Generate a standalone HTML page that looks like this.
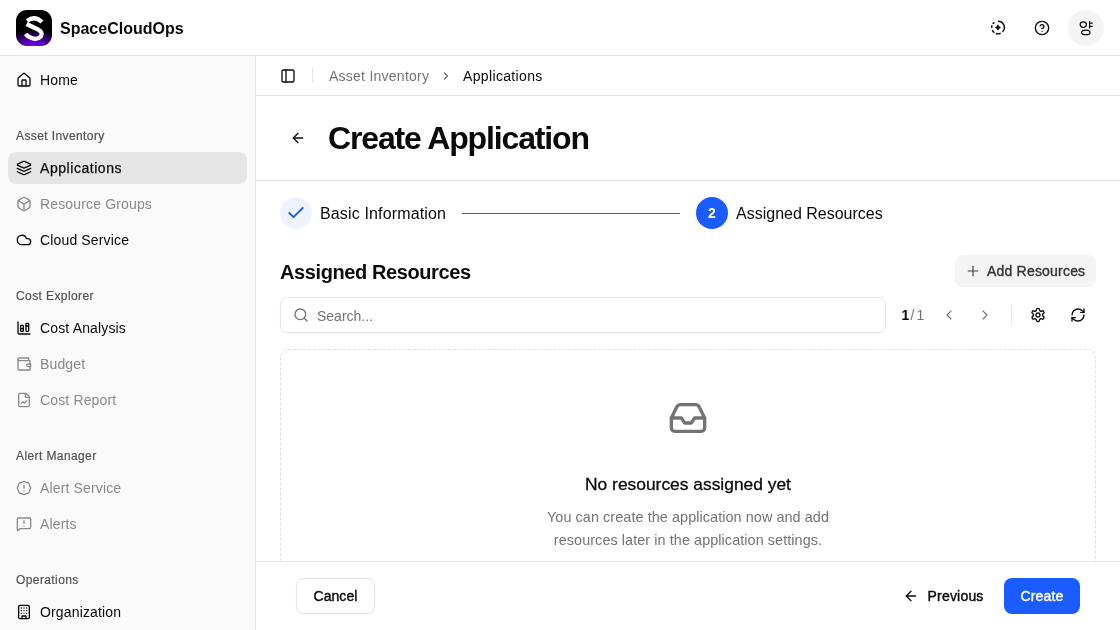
<!DOCTYPE html>
<html><head><meta charset="utf-8">
<style>
*{box-sizing:border-box;margin:0;padding:0}
html,body{width:1120px;height:630px;overflow:hidden;background:#fff;font-family:"Liberation Sans",sans-serif;color:#0a0a0a}
.abs{position:absolute}
svg{display:block}
.ic{position:absolute;fill:none;stroke:currentColor;stroke-linecap:round;stroke-linejoin:round}
.t{position:absolute;white-space:nowrap;line-height:1}
#header{position:absolute;left:0;top:0;width:1120px;height:56px;border-bottom:1px solid #e5e5e5;background:#fff}
#side{position:absolute;left:0;top:56px;width:256px;height:574px;background:#fafafa;border-right:1px solid #e5e5e5}
.nav{position:absolute;left:8px;width:239px;height:32px;border-radius:8px}
.nav .ic{left:8px;top:8px;width:16px;height:16px}
.nav .t{left:32px;top:9px;font-size:14px;line-height:14px;letter-spacing:.15px}
.nav.dis{color:#8a8a8a}
.nav.act{background:#e5e5e5}
.lbl{position:absolute;left:16px;font-size:12px;color:#525252;line-height:12px;letter-spacing:.4px;-webkit-text-stroke:.2px #525252}
</style></head><body><div id="root" style="position:absolute;left:0;top:0;width:1120px;height:630px;will-change:transform">

<div id="header">
  <div class="abs" style="left:16px;top:10px;width:36px;height:36px;border-radius:11px;background:radial-gradient(ellipse 80% 45% at 50% 100%,#7a00ff 0%,#4a00a0 45%,rgba(0,0,0,0) 100%),#000;overflow:hidden">
    <svg width="36" height="36" viewBox="0 0 36 36" fill="none" stroke="#fff" stroke-width="4.3"><path d="M11.2 11Q18.5 5 26 12"/><path d="M10.6 14L21.5 19.2Q27.3 22.2 25 26.4Q21.5 30.2 15.5 28Q11.5 26.6 9.6 24"/></svg>
  </div>
  <div class="t" style="left:60px;top:21px;font-size:16px;font-weight:700;line-height:16px">SpaceCloudOps</div>
  <svg class="abs" style="left:990px;top:20px" width="16" height="16" viewBox="0 0 16 16" fill="none" stroke="#0a0a0a" stroke-width="1.45" stroke-linecap="butt">
    <path d="M8.00 1.15A6.35 6.35 0 0 1 12.49 11.99M10.68 13.26A6.35 6.35 0 0 1 5.83 13.47M4.36 12.70A6.35 6.35 0 0 1 2.24 10.18M1.67 8.05A6.35 6.35 0 0 1 2.03 5.33M2.80 3.86A6.35 6.35 0 0 1 4.36 2.30"/>
    <path d="M8 4.3Q8.9 6.6 11 7.5Q8.9 8.4 8 10.7Q7.1 8.4 5 7.5Q7.1 6.6 8 4.3Z" fill="#0a0a0a" stroke="none"/>
  </svg>
  <svg class="ic" stroke-width="2" style="left:1034px;top:20px" width="16" height="16" viewBox="0 0 24 24"><circle cx="12" cy="12" r="10"/><path d="M9.09 9a3 3 0 0 1 5.83 1c0 2-3 3-3 3"/><path d="M12 17h.01"/></svg>
  <div class="abs" style="left:1068px;top:10px;width:36px;height:36px;border-radius:50%;background:#f4f4f4"></div>
  <svg class="abs" style="left:1074px;top:16px" width="24" height="24" viewBox="0 0 24 24" fill="none" stroke="#0a0a0a" stroke-width="1.25">
    <ellipse cx="9.3" cy="8.6" rx="3.1" ry="2.85"/>
    <path d="M15.6 5v7.6M15.6 7.2h3.1M15.6 10.3h3.1"/>
    <ellipse cx="11.8" cy="16.4" rx="4.2" ry="2.3"/>
  </svg>
</div>

<div id="side">
  <div class="nav" style="top:8px">
    <svg class="ic" stroke-width="2" width="16" height="16" viewBox="0 0 24 24"><path d="M15 21v-8a1 1 0 0 0-1-1h-4a1 1 0 0 0-1 1v8"/><path d="M3 10a2 2 0 0 1 .709-1.528l7-5.999a2 2 0 0 1 2.582 0l7 5.999A2 2 0 0 1 21 10v9a2 2 0 0 1-2 2H5a2 2 0 0 1-2-2z"/></svg>
    <div class="t">Home</div>
  </div>
  <div class="lbl" style="top:74px">Asset Inventory</div>
  <div class="nav act" style="top:96px">
    <svg class="ic" stroke-width="2" width="16" height="16" viewBox="0 0 24 24"><path d="m12.83 2.18a2 2 0 0 0-1.66 0L2.6 6.08a1 1 0 0 0 0 1.83l8.58 3.91a2 2 0 0 0 1.66 0l8.58-3.9a1 1 0 0 0 0-1.83Z"/><path d="m22 17.65-9.17 4.16a2 2 0 0 1-1.66 0L2 17.65"/><path d="m22 12.65-9.17 4.16a2 2 0 0 1-1.66 0L2 12.65"/></svg>
    <div class="t" style="letter-spacing:.55px;-webkit-text-stroke:.25px #0a0a0a">Applications</div>
  </div>
  <div class="nav dis" style="top:132px">
    <svg class="ic" stroke-width="2" width="16" height="16" viewBox="0 0 24 24"><path d="M21 8a2 2 0 0 0-1-1.73l-7-4a2 2 0 0 0-2 0l-7 4A2 2 0 0 0 3 8v8a2 2 0 0 0 1 1.73l7 4a2 2 0 0 0 2 0l7-4A2 2 0 0 0 21 16Z"/><path d="m3.3 7 8.7 5 8.7-5"/><path d="M12 22V12"/></svg>
    <div class="t">Resource Groups</div>
  </div>
  <div class="nav" style="top:168px">
    <svg class="ic" stroke-width="2" width="16" height="16" viewBox="0 0 24 24"><path d="M17.5 19H9a7 7 0 1 1 6.71-9h1.79a4.5 4.5 0 1 1 0 9Z"/></svg>
    <div class="t">Cloud Service</div>
  </div>
  <div class="lbl" style="top:234px">Cost Explorer</div>
  <div class="nav" style="top:256px">
    <svg class="ic" stroke-width="2" width="16" height="16" viewBox="0 0 24 24"><path d="M11 13H7"/><path d="M19 9h-4"/><path d="M3 3v16a2 2 0 0 0 2 2h16"/><rect x="15" y="5" width="4" height="12" rx="1"/><rect x="7" y="8" width="4" height="9" rx="1"/></svg>
    <div class="t">Cost Analysis</div>
  </div>
  <div class="nav dis" style="top:292px">
    <svg class="ic" stroke-width="2" width="16" height="16" viewBox="0 0 24 24"><path d="M21 12V7H5a2 2 0 0 1 0-4h14v4"/><path d="M3 5v14a2 2 0 0 0 2 2h16v-5"/><path d="M18 12a2 2 0 0 0 0 4h4v-4Z"/></svg>
    <div class="t">Budget</div>
  </div>
  <div class="nav dis" style="top:328px">
    <svg class="ic" stroke-width="2" width="16" height="16" viewBox="0 0 24 24"><path d="M6 22a2 2 0 0 1-2-2V4a2 2 0 0 1 2-2h8a2.4 2.4 0 0 1 1.704.706l3.588 3.588A2.4 2.4 0 0 1 20 8v12a2 2 0 0 1-2 2z"/><path d="M14 2v5a1 1 0 0 0 1 1h5"/><path d="m16 13-3.5 3.5-2-2L8 17"/></svg>
    <div class="t">Cost Report</div>
  </div>
  <div class="lbl" style="top:394px">Alert Manager</div>
  <div class="nav dis" style="top:416px">
    <svg class="ic" stroke-width="2" width="16" height="16" viewBox="0 0 24 24"><path d="M3.85 8.62a4 4 0 0 1 4.78-4.77 4 4 0 0 1 6.74 0 4 4 0 0 1 4.78 4.78 4 4 0 0 1 0 6.74 4 4 0 0 1-4.77 4.78 4 4 0 0 1-6.75 0 4 4 0 0 1-4.78-4.77 4 4 0 0 1 0-6.76Z"/><line x1="12" x2="12" y1="8" y2="12"/><line x1="12" x2="12.01" y1="16" y2="16"/></svg>
    <div class="t">Alert Service</div>
  </div>
  <div class="nav dis" style="top:452px">
    <svg class="ic" stroke-width="2" width="16" height="16" viewBox="0 0 24 24"><path d="M22 17a2 2 0 0 1-2 2H6.828a2 2 0 0 0-1.414.586l-2.202 2.202A.71.71 0 0 1 2 21.286V5a2 2 0 0 1 2-2h16a2 2 0 0 1 2 2z"/><path d="M12 15h.01"/><path d="M12 7v4"/></svg>
    <div class="t">Alerts</div>
  </div>
  <div class="lbl" style="top:518px">Operations</div>
  <div class="nav" style="top:540px">
    <svg class="ic" stroke-width="2" width="16" height="16" viewBox="0 0 24 24"><rect width="16" height="20" x="4" y="2" rx="2" ry="2"/><path d="M9 22v-4h6v4"/><path d="M8 6h.01"/><path d="M16 6h.01"/><path d="M12 6h.01"/><path d="M12 10h.01"/><path d="M12 14h.01"/><path d="M16 10h.01"/><path d="M16 14h.01"/><path d="M8 10h.01"/><path d="M8 14h.01"/></svg>
    <div class="t">Organization</div>
  </div>
</div>

<!-- main -->
<div class="abs" style="left:256px;top:95px;width:864px;height:1px;background:#e5e5e5"></div>
<svg class="ic" stroke-width="2" style="left:280px;top:68px" width="16" height="16" viewBox="0 0 24 24"><rect width="18" height="18" x="3" y="3" rx="2"/><path d="M9 3v18"/></svg>
<div class="abs" style="left:312px;top:68px;width:1px;height:15px;background:#e5e5e5"></div>
<div class="t" style="left:329px;top:69px;font-size:14px;color:#737373;letter-spacing:.25px">Asset Inventory</div>
<svg class="ic" stroke-width="2.4" style="left:440px;top:70px;color:#666" width="12" height="12" viewBox="0 0 24 24"><path d="m9 18 6-6-6-6"/></svg>
<div class="t" style="left:463px;top:69px;font-size:14px;letter-spacing:.35px">Applications</div>

<svg class="ic" stroke-width="2" style="left:290px;top:130px" width="16" height="16" viewBox="0 0 24 24"><path d="m12 19-7-7 7-7"/><path d="M19 12H5"/></svg>
<div class="t" style="left:328px;top:122px;font-size:32px;font-weight:700;letter-spacing:-1.15px">Create Application</div>
<div class="abs" style="left:256px;top:180px;width:864px;height:1px;background:#e5e5e5"></div>

<!-- stepper -->
<div class="abs" style="left:280px;top:197px;width:32px;height:32px;border-radius:50%;background:#eef3ff"></div>
<svg class="ic" stroke-width="2.3" style="left:286px;top:203px;color:#1a5cff" width="20" height="20" viewBox="0 0 24 24"><path d="M20 6 9 17l-5-5"/></svg>
<div class="t" style="left:320px;top:206px;font-size:16px;letter-spacing:.15px">Basic Information</div>
<div class="abs" style="left:462px;top:213px;width:218px;height:1px;background:#1a5cff"></div>
<div class="abs" style="left:696px;top:197px;width:32px;height:32px;border-radius:50%;background:#1a5cff;color:#fff;font-size:14px;font-weight:700;text-align:center;line-height:33px">2</div>
<div class="t" style="left:736px;top:206px;font-size:16px">Assigned Resources</div>

<div class="t" style="left:280px;top:262px;font-size:20px;font-weight:700;letter-spacing:-.4px">Assigned Resources</div>
<div class="abs" style="left:955px;top:255px;width:141px;height:32px;border-radius:8px;background:#f4f4f5"></div>
<svg class="ic" stroke-width="1.75" style="left:965px;top:263px;color:#3f3f46" width="16" height="16" viewBox="0 0 24 24"><path d="M5 12h14"/><path d="M12 5v14"/></svg>
<div class="t" style="left:987px;top:264px;font-size:14px;color:#333338;letter-spacing:.2px;-webkit-text-stroke:.35px #333338">Add Resources</div>

<div class="abs" style="left:280px;top:297px;width:606px;height:36px;border-radius:8px;border:1px solid #e5e5e5;box-shadow:0 1px 2px rgba(0,0,0,.05)"></div>
<svg class="ic" stroke-width="2" style="left:293px;top:307px;color:#737373" width="16" height="16" viewBox="0 0 24 24"><circle cx="11" cy="11" r="8"/><path d="m21 21-4.3-4.3"/></svg>
<div class="t" style="left:317px;top:309px;font-size:14px;color:#737373">Search...</div>

<div class="t" style="left:901.5px;top:307.6px;font-size:14px;font-weight:700">1</div><div class="t" style="left:910.5px;top:307.6px;font-size:14px;color:#737373">/</div><div class="t" style="left:916.5px;top:307.6px;font-size:14px;color:#737373">1</div>
<svg class="ic" stroke-width="1.6" style="left:941px;top:307px;color:#737373" width="16" height="16" viewBox="0 0 24 24"><path d="m15 18-6-6 6-6"/></svg>
<svg class="ic" stroke-width="1.6" style="left:977px;top:307px;color:#737373" width="16" height="16" viewBox="0 0 24 24"><path d="m9 18 6-6-6-6"/></svg>
<div class="abs" style="left:1011px;top:305px;width:1px;height:20px;background:#e5e5e5"></div>
<svg class="ic" stroke-width="2" style="left:1030px;top:307px" width="16" height="16" viewBox="0 0 24 24"><path d="M12.22 2h-.44a2 2 0 0 0-2 2v.18a2 2 0 0 1-1 1.730l-.43.25a2 2 0 0 1-2 0l-.15-.08a2 2 0 0 0-2.73.73l-.22.38a2 2 0 0 0 .73 2.73l.15.1a2 2 0 0 1 1 1.72v.51a2 2 0 0 1-1 1.74l-.15.09a2 2 0 0 0-.73 2.73l.22.38a2 2 0 0 0 2.73.73l.15-.08a2 2 0 0 1 2 0l.43.25a2 2 0 0 1 1 1.73V20a2 2 0 0 0 2 2h.44a2 2 0 0 0 2-2v-.18a2 2 0 0 1 1-1.73l.43-.25a2 2 0 0 1 2 0l.15.08a2 2 0 0 0 2.73-.73l.22-.39a2 2 0 0 0-.73-2.73l-.15-.08a2 2 0 0 1-1-1.740v-.5a2 2 0 0 1 1-1.74l.15-.09a2 2 0 0 0 .73-2.73l-.22-.38a2 2 0 0 0-2.73-.73l-.15.08a2 2 0 0 1-2 0l-.43-.25a2 2 0 0 1-1-1.73V4a2 2 0 0 0-2-2z"/><circle cx="12" cy="12" r="3"/></svg>
<svg class="ic" stroke-width="2" style="left:1070px;top:307px" width="16" height="16" viewBox="0 0 24 24"><path d="M3 12a9 9 0 0 1 9-9 9.75 9.75 0 0 1 6.74 2.74L21 8"/><path d="M21 3v5h-5"/><path d="M21 12a9 9 0 0 1-9 9 9.75 9.75 0 0 1-6.74-2.740L3 16"/><path d="M8 16H3v5"/></svg>

<!-- empty state -->
<div class="abs" style="left:280px;top:349px;width:816px;height:260px;border:1px dashed #e0e0e0;border-radius:8px"></div>
<svg class="ic" stroke-width="2" style="left:668px;top:398px;color:#737373" width="40" height="40" viewBox="0 0 24 24"><polyline points="22 12 16 12 14 15 10 15 8 12 2 12"/><path d="M5.45 5.11 2 12v6a2 2 0 0 0 2 2h16a2 2 0 0 0 2-2v-6l-3.45-6.89A2 2 0 0 0 16.76 4H7.24a2 2 0 0 0-1.79 1.11z"/></svg>
<div class="t" style="left:280px;width:816px;text-align:center;top:475.5px;font-size:17.4px;-webkit-text-stroke:.3px #0a0a0a">No resources assigned yet</div>
<div class="abs" style="left:280px;width:816px;text-align:center;top:506px;font-size:14.4px;line-height:23px;color:#737373;letter-spacing:.08px">You can create the application now and add<br>resources later in the application settings.</div>

<!-- footer -->
<div class="abs" style="left:256px;top:561px;width:864px;height:69px;background:#fff;border-top:1px solid #e5e5e5"></div>
<div class="abs" style="left:296px;top:578px;width:79px;height:36px;border-radius:8px;border:1px solid #e5e5e5;box-shadow:0 1px 2px rgba(0,0,0,.05)"></div>
<div class="t" style="left:313.5px;top:589px;font-size:14px;-webkit-text-stroke:.4px #0a0a0a;letter-spacing:.05px">Cancel</div>
<svg class="ic" stroke-width="2" style="left:903px;top:588px" width="16" height="16" viewBox="0 0 24 24"><path d="m12 19-7-7 7-7"/><path d="M19 12H5"/></svg>
<div class="t" style="left:927.5px;top:589px;font-size:14px;-webkit-text-stroke:.4px #0a0a0a;letter-spacing:.2px">Previous</div>
<div class="abs" style="left:1004px;top:578px;width:76px;height:36px;border-radius:8px;background:#1a5cff"></div>
<div class="t" style="left:1020.5px;top:589px;font-size:14px;color:#fff;-webkit-text-stroke:.4px #fff;letter-spacing:.15px">Create</div>

</div></body></html>
